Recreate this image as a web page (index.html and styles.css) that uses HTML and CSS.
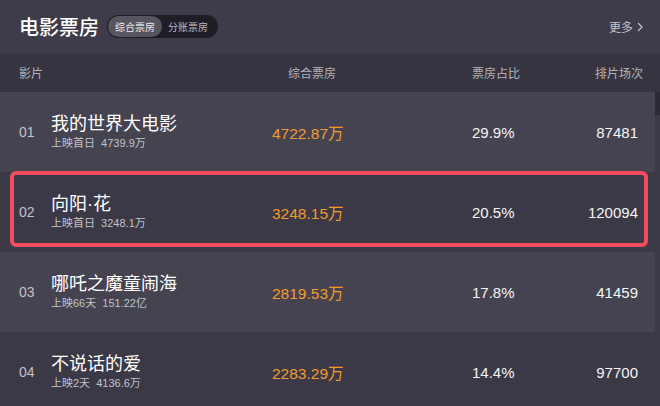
FILE: index.html
```html
<!DOCTYPE html>
<html lang="zh-CN">
<head>
<meta charset="utf-8">
<title>电影票房</title>
<link rel="stylesheet" href="styles.css">
</head>
<body>
<div class="page">
  <div class="topbar">
    <div class="topbar-left">
      <h1 class="title">电影票房</h1>
      <div class="toggle">
        <span class="toggle-item active">综合票房</span>
        <span class="toggle-item">分账票房</span>
      </div>
    </div>
    <a class="more">更多<svg class="chev" width="6" height="10" viewBox="0 0 6 10"><path d="M1 1 L5 5 L1 9" fill="none" stroke="currentColor" stroke-width="1.2"/></svg></a>
  </div>
  <div class="colhead">
    <span class="c-film">影片</span>
    <span class="c-box">综合票房</span>
    <span class="c-ratio">票房占比</span>
    <span class="c-count">排片场次</span>
  </div>
  <div class="list">
    <div class="rows">
      <div class="row light">
        <span class="rank">01</span>
        <div class="film">
          <div class="name">我的世界大电影</div>
          <div class="sub">上映首日&nbsp;&nbsp;4739.9万</div>
        </div>
        <span class="box">4722.87万</span>
        <span class="ratio">29.9%</span>
        <span class="count">87481</span>
      </div>
      <div class="row dark selected">
        <span class="rank">02</span>
        <div class="film">
          <div class="name">向阳·花</div>
          <div class="sub">上映首日&nbsp;&nbsp;3248.1万</div>
        </div>
        <span class="box">3248.15万</span>
        <span class="ratio">20.5%</span>
        <span class="count">120094</span>
      </div>
      <div class="row light">
        <span class="rank">03</span>
        <div class="film">
          <div class="name">哪吒之魔童闹海</div>
          <div class="sub">上映66天&nbsp;&nbsp;151.22亿</div>
        </div>
        <span class="box">2819.53万</span>
        <span class="ratio">17.8%</span>
        <span class="count">41459</span>
      </div>
      <div class="row dark">
        <span class="rank">04</span>
        <div class="film">
          <div class="name">不说话的爱</div>
          <div class="sub">上映2天&nbsp;&nbsp;4136.6万</div>
        </div>
        <span class="box">2283.29万</span>
        <span class="ratio">14.4%</span>
        <span class="count">97700</span>
      </div>
    </div>
    <div class="scrollbar"><div class="thumb"></div></div>
  </div>
</div>
</body>
</html>
```
FILE: styles.css
```css
*, *::before, *::after { box-sizing: border-box; }
html, body {
  margin: 0;
  padding: 0;
  background: #3b3946;
}
body {
  width: 660px;
  height: 406px;
  overflow: hidden;
  font-family: "Liberation Sans", "Noto Sans CJK SC", sans-serif;
  color: #f2f2f4;
}
.page {
  display: flex;
  flex-direction: column;
  width: 660px;
}
.topbar {
  height: 53px;
  background: #3e3c4a;
  display: flex;
  align-items: center;
  justify-content: space-between;
  padding: 0 17px 0 19px;
}
.topbar-left {
  display: flex;
  align-items: center;
  gap: 8px;
}
.title {
  margin: 0;
  font-size: 20px;
  font-weight: 500;
  line-height: 24px;
  color: #ffffff;
  font-family: "Noto Sans CJK SC", sans-serif;
}
.toggle {
  display: flex;
  align-items: center;
  height: 23px;
  padding: 1px;
  border-radius: 12px;
  background: #1f1e26;
}
.toggle-item {
  font-family: "Noto Sans CJK SC", sans-serif;
  font-size: 10px;
  line-height: 21px;
  padding: 0 7px;
  color: #b9b8c2;
  border-radius: 11px;
}
.toggle-item.active {
  background: #57555f;
  color: #ececef;
}
.toggle-item + .toggle-item {
  padding: 0 9px 0 6px;
}
.more {
  display: flex;
  align-items: center;
  gap: 4px;
  font-family: "Noto Sans CJK SC", sans-serif;
  font-size: 12px;
  color: #c4c3cb;
  text-decoration: none;
}
.chev { display: block; }
.colhead {
  height: 39px;
  background: #363440;
  display: grid;
  grid-template-columns: 32px 221px 200px 1fr auto;
  align-items: center;
  padding: 0 17px 0 19px;
  font-family: "Noto Sans CJK SC", sans-serif;
  font-size: 12px;
  color: #b3b2bb;
}
.c-film { grid-column: 1 / 3; }
.c-box { padding-left: 16px; }
.list {
  display: flex;
}
.rows {
  flex: 1;
  display: flex;
  flex-direction: column;
}
.scrollbar {
  width: 5px;
  background: #3b3946;
}
.thumb {
  height: 23px;
  background: #2b2a32;
}
.row {
  position: relative;
  height: 80px;
  display: grid;
  grid-template-columns: 32px 221px 200px 1fr auto;
  align-items: center;
  padding: 0 17px 0 19px;
}
.row.light { background: #45434f; }
.row.dark { background: #3b3946; }
.row.selected { z-index: 1; }
.row.selected::after {
  content: "";
  position: absolute;
  left: 10px;
  right: 7px;
  top: -1px;
  height: 76px;
  border: 4px solid #f24a5e;
  border-radius: 6px;
  pointer-events: none;
}
.rank {
  font-size: 14px;
  color: #c3c2cb;
}
.film {
  display: flex;
  flex-direction: column;
}
.name {
  font-size: 18px;
  line-height: 22px;
  color: #ffffff;
}
.sub {
  font-size: 11px;
  line-height: 15px;
  color: #c2c1ca;
  margin-top: 1px;
}
.box {
  font-size: 15.5px;
  color: #f49a2e;
}
.ratio {
  font-size: 15px;
  color: #f4f4f6;
}
.count {
  font-size: 15px;
  color: #f4f4f6;
  text-align: right;
}
```
